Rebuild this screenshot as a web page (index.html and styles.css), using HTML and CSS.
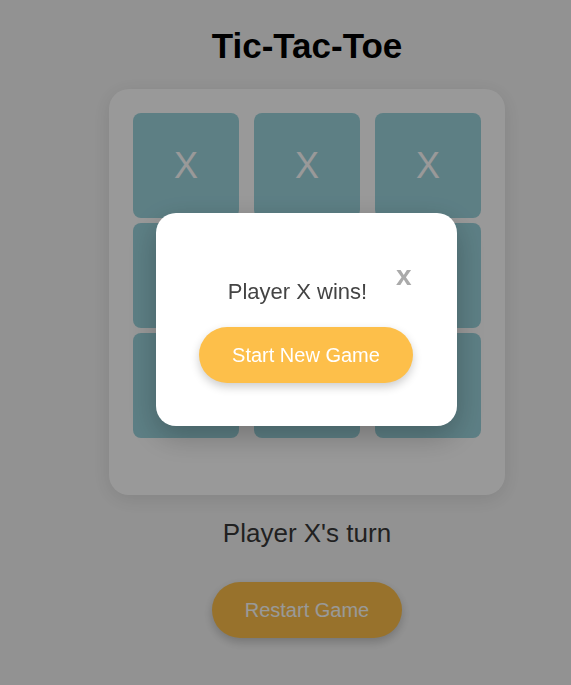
FILE: index.html
```html
<!DOCTYPE html>
<html lang="en">
<head>
<meta charset="utf-8">
<title>Tic-Tac-Toe</title>
<link rel="stylesheet" href="styles.css">
</head>
<body>
<main class="game">
  <h1 class="title">Tic-Tac-Toe</h1>
  <div class="board">
    <div class="cell">X</div>
    <div class="cell">X</div>
    <div class="cell">X</div>
    <div class="cell"></div>
    <div class="cell"></div>
    <div class="cell"></div>
    <div class="cell"></div>
    <div class="cell"></div>
    <div class="cell"></div>
  </div>
  <p class="status">Player X's turn</p>
  <button class="btn">Restart Game</button>
</main>
<div class="overlay">
  <div class="modal">
    <span class="close">x</span>
    <p class="message">Player X wins!</p>
    <button class="btn btn-modal">Start New Game</button>
  </div>
</div>
</body>
</html>
```
FILE: styles.css
```css
html, body {
  margin: 0;
  padding: 0;
}
body {
  background: #f4f4f4;
  font-family: "Liberation Sans", Arial, sans-serif;
  height: 685px;
  overflow: hidden;
}
.game {
  display: flex;
  flex-direction: column;
  align-items: center;
  padding-left: 43px;
}
.title {
  margin: 26px 0 23px;
  font-size: 35px;
  line-height: 40px;
  font-weight: bold;
  color: #000;
}
.board {
  display: grid;
  grid-template-columns: repeat(3, 106px);
  grid-template-rows: repeat(3, 105px);
  gap: 5px 15px;
  padding: 24px 24px 57px;
  background: #fff;
  border-radius: 20px;
  box-shadow: 0 4px 20px rgba(0, 0, 0, 0.1);
}
.cell {
  background: #9bd4dd;
  border-radius: 8px;
  display: flex;
  align-items: center;
  justify-content: center;
  font-size: 36px;
  color: #fff;
}
.status {
  margin: 23px 0 34px;
  font-size: 26px;
  line-height: 30px;
  color: #383838;
}
.btn {
  font-family: "Liberation Sans", Arial, sans-serif;
  font-size: 20px;
  line-height: 24px;
  padding: 16px 33px;
  border: none;
  border-radius: 28px;
  background: #fdbf4a;
  color: #fff;
  box-shadow: 0 4px 10px rgba(0, 0, 0, 0.2);
  cursor: pointer;
}
.overlay {
  position: fixed;
  inset: 0;
  background: rgba(0, 0, 0, 0.4);
  display: flex;
  justify-content: center;
  align-items: center;
  padding: 0 0 46px 41px;
}
.modal {
  position: relative;
  width: 301px;
  box-sizing: border-box;
  padding: 66px 0 43px;
  background: #fff;
  border-radius: 20px;
  box-shadow: 0 10px 30px rgba(0, 0, 0, 0.25);
  display: flex;
  flex-direction: column;
  align-items: center;
}
.close {
  position: absolute;
  top: 47px;
  right: 45px;
  font-size: 28px;
  line-height: 32px;
  font-weight: bold;
  color: #aaa;
  cursor: pointer;
}
.message {
  margin: 0 17px 23px 0;
  font-size: 22px;
  line-height: 25px;
  color: #444;
}
.btn-modal {
  box-shadow: 0 4px 10px rgba(0, 0, 0, 0.2);
}
```
